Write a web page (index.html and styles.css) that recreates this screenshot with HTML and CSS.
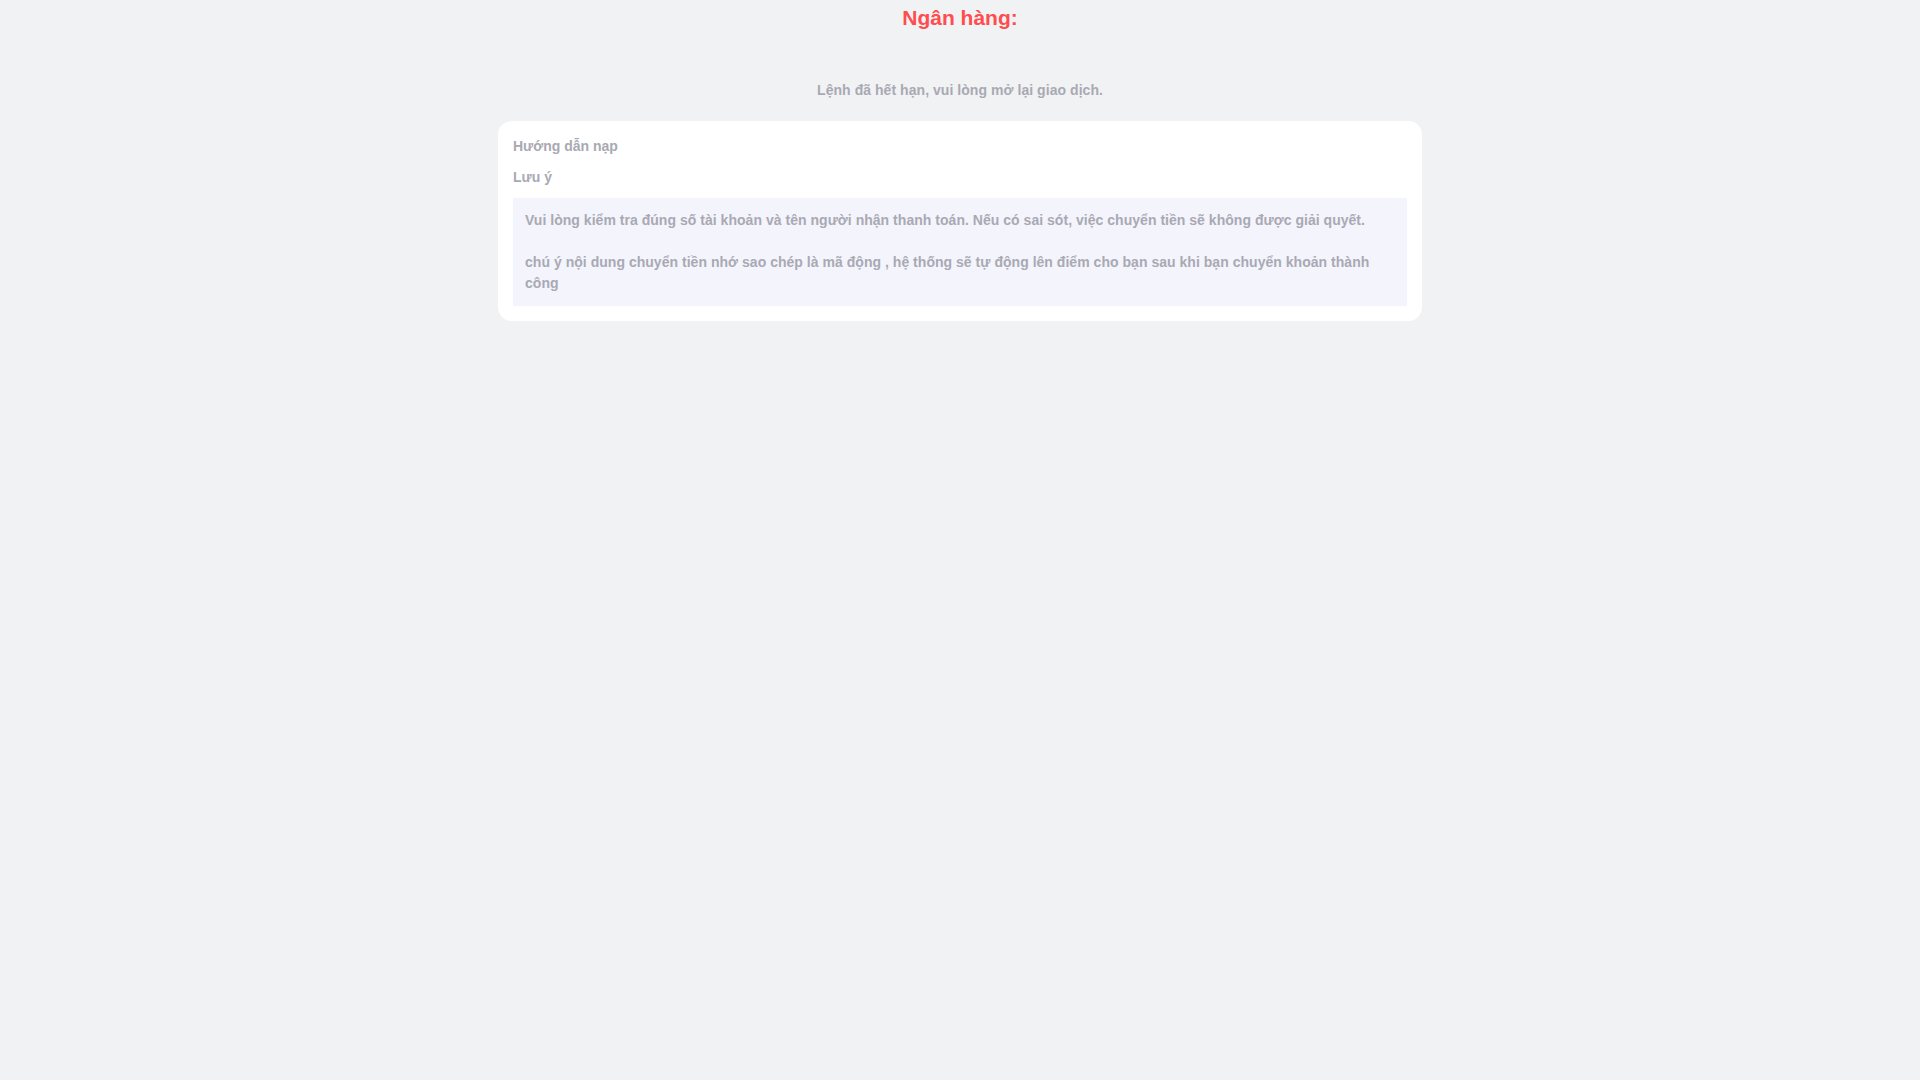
FILE: index.html
```html
<!DOCTYPE html>
<html lang="vi">
<head>
<meta charset="utf-8">
<title>Ngân hàng</title>
<link rel="stylesheet" href="styles.css">
</head>
<body>
<main class="page">
  <h1 class="bank-title">Ngân hàng:</h1>
  <p class="expired">Lệnh đã hết hạn, vui lòng mở lại giao dịch.</p>
  <section class="card">
    <h2 class="card-heading">Hướng dẫn nạp</h2>
    <h3 class="card-sub">Lưu ý</h3>
    <div class="note">
      <p>Vui lòng kiểm tra đúng số tài khoản và tên người nhận thanh toán. Nếu có sai sót, việc chuyển tiền sẽ không được giải quyết.</p>
      <p>chú ý nội dung chuyển tiền nhớ sao chép là mã động , hệ thống sẽ tự động lên điểm cho bạn sau khi bạn chuyển khoản thành công</p>
    </div>
  </section>
</main>
</body>
</html>
```
FILE: styles.css
```css
html, body {
  margin: 0;
  padding: 0;
  background: #f1f2f4;
  font-family: "Liberation Sans", Arial, sans-serif;
  font-weight: 700;
  color: #a9a9b3;
  font-size: 14px;
  line-height: 21px;
}

.page {
  display: flex;
  flex-direction: column;
  align-items: center;
}

.bank-title {
  margin: 0;
  font-size: 21px;
  line-height: 36px;
  color: #ff4d4f;
  font-weight: 700;
}

.expired {
  margin: 44px 0 0;
  text-align: center;
  letter-spacing: 0.05px;
}

.card {
  box-sizing: border-box;
  width: 924px;
  margin-top: 20px;
  background: #ffffff;
  border-radius: 14px;
  padding: 15px;
}

.card-heading,
.card-sub {
  margin: 0 0 10px;
  font-size: 14px;
  line-height: 21px;
  font-weight: 700;
}

.note {
  background: #f4f4fd;
  padding: 12px;
  letter-spacing: 0.03px;
}

.note p {
  margin: 0;
}

.note p + p {
  margin-top: 21px;
}
```
